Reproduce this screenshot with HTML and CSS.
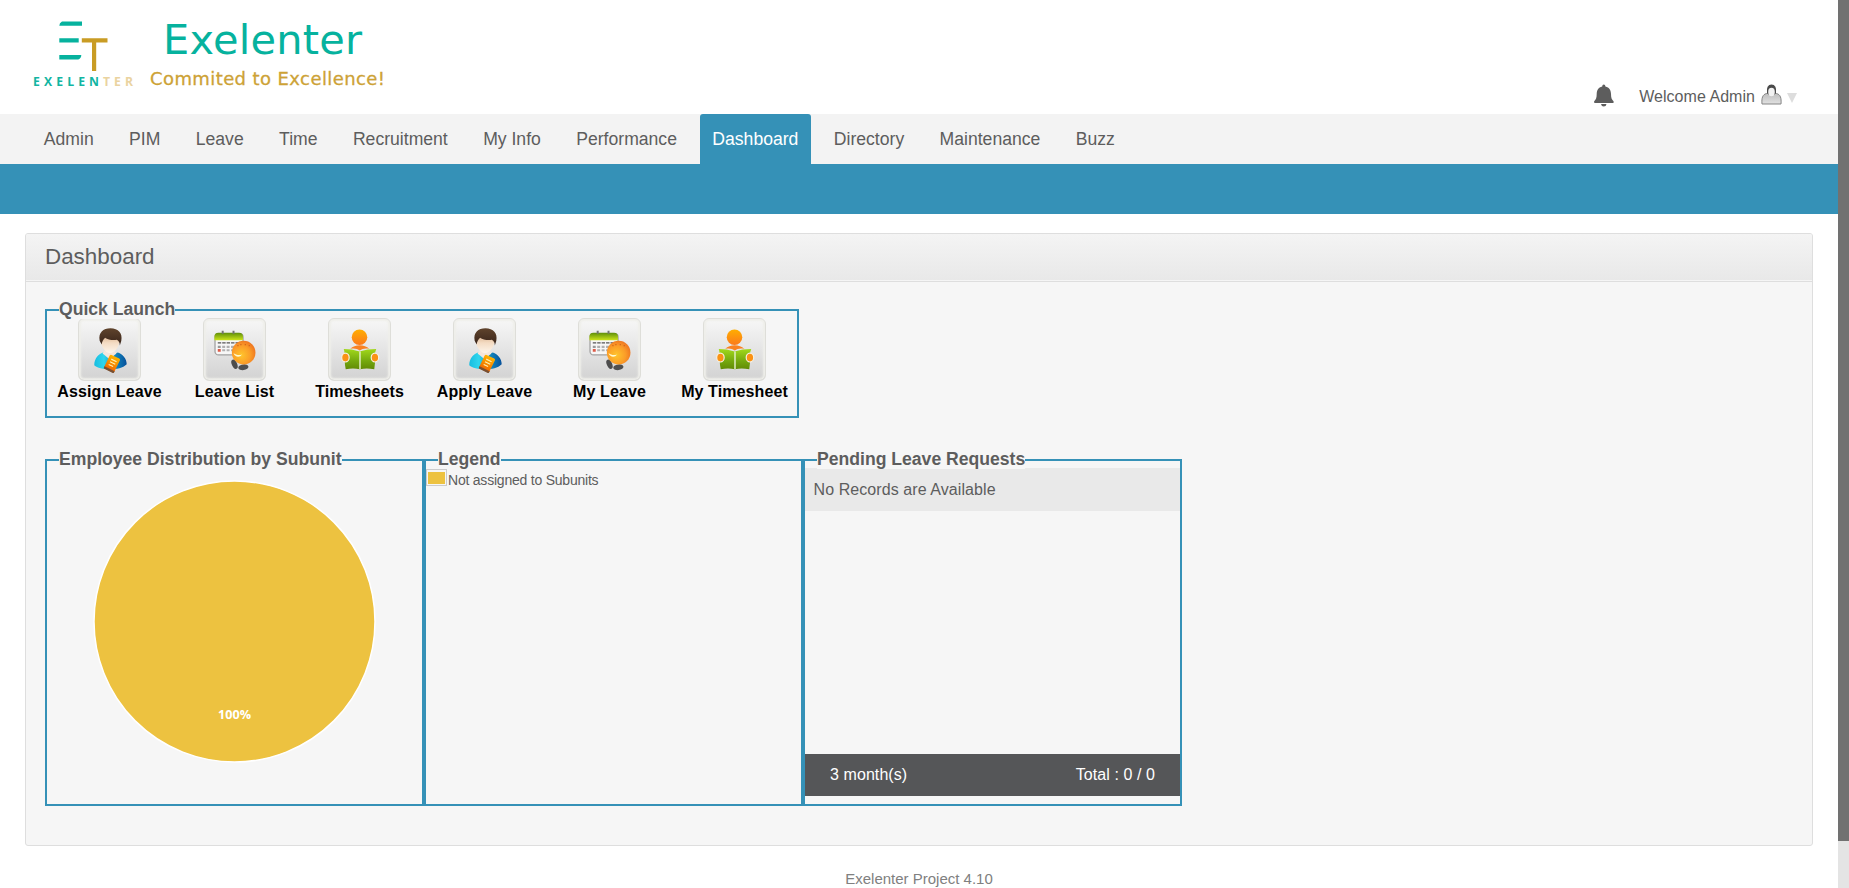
FILE: index.html
```html
<!DOCTYPE html>
<html lang="en">
<head>
<meta charset="utf-8">
<title>Exelenter</title>
<link rel="stylesheet" href="styles.css">
</head>
<body>
<svg class="defs" width="0" height="0" aria-hidden="true">
  <defs>
    <linearGradient id="gHair" x1="0" y1="0" x2="0" y2="1"><stop offset="0" stop-color="#5f432c"/><stop offset="1" stop-color="#38241a"/></linearGradient>
    <linearGradient id="gFace" x1="0" y1="0" x2="0" y2="1"><stop offset="0" stop-color="#c9976c"/><stop offset=".55" stop-color="#f4dcc4"/><stop offset="1" stop-color="#fdf4ea"/></linearGradient>
    <linearGradient id="gShirt" x1="0" y1="0" x2="1" y2="0"><stop offset="0" stop-color="#18bde0"/><stop offset=".3" stop-color="#2fd6ee"/><stop offset=".6" stop-color="#1390c4"/><stop offset="1" stop-color="#07509a"/></linearGradient>
    <linearGradient id="gBook" x1="0" y1="0" x2="0" y2="1"><stop offset="0" stop-color="#ffb400"/><stop offset="1" stop-color="#ef6200"/></linearGradient>
    <linearGradient id="gCal" x1="0" y1="0" x2="0" y2="1"><stop offset="0" stop-color="#5f8f0a"/><stop offset="1" stop-color="#cbe41a"/></linearGradient>
    <radialGradient id="gBall" cx=".4" cy=".6" r=".65"><stop offset="0" stop-color="#ffc52c"/><stop offset=".6" stop-color="#fb9d28"/><stop offset="1" stop-color="#ee7420"/></radialGradient>
    <linearGradient id="gGreen" x1="0" y1="0" x2="0" y2="1"><stop offset="0" stop-color="#a2d81c"/><stop offset=".6" stop-color="#74a80e"/><stop offset="1" stop-color="#628b05"/></linearGradient>
    <linearGradient id="gHead" x1="0" y1="0" x2="0" y2="1"><stop offset="0" stop-color="#ffae00"/><stop offset="1" stop-color="#fb7a1c"/></linearGradient>
    <linearGradient id="gUser" x1="0" y1="0" x2="0" y2="1"><stop offset="0" stop-color="#bdbdbd"/><stop offset="1" stop-color="#e2e2e2"/></linearGradient>

    <symbol id="person" viewBox="0 0 62 62">
      <path d="M15.500 47c0-7 4-11 9-13l7 3 8-3c5 2 9 6 9 12-4 4-10 5-17 5s-13-1-16-4z" fill="url(#gShirt)"/>
      <path d="M26 32l-2 3 7 6 7-6-2-3z" fill="#f5e6dc"/>
      <path d="M22 20c0-6 4-8 9.500-8s9.500 3 9.500 9c0 8-5 13.500-9.500 13.500S22 28 22 20z" fill="url(#gFace)"/>
      <path d="M21 22c-1.500-8 3.500-12.500 11-12.500 8 0 12.500 5 11 12.500L41.500 27c0-3-1-5-3-6-4 1-9 0-12-2-2 2-3 4-3.500 7z" fill="url(#gHair)"/>
      <g transform="rotate(26 33.500 45)"><rect x="28" y="37.500" width="11.500" height="15.500" rx="1.500" fill="url(#gBook)"/><path d="M28 51h11.500v1.500q0 1-1 1H29q-1 0-1-1z" fill="#795032"/><path d="M31 41.500h6M31 44.500h6M31 47.500h5" stroke="#fff0b0" stroke-width="1.200"/></g>
    </symbol>
    <symbol id="calendar" viewBox="0 0 62 62">
      <rect x="11.200" y="15" width="28.500" height="21.500" rx="3.500" fill="#f7f7f7" stroke="#a1a1a1" stroke-width="1.300"/>
      <path d="M10.600 21.500v-3.500q0-4 4-4h21q4 0 4 4v3.500z" fill="url(#gCal)"/>
      <path d="M19 12v3M30 12v3" stroke="#747474" stroke-width="2"/>
      <path d="M14 24.300h22" stroke="#555" stroke-width="1.300" stroke-dasharray="3.500 1"/>
      <path d="M18.500 28.300h17M18.500 31.800h12" stroke="#b0b0b0" stroke-width="2.200" stroke-dasharray="3 1.500"/>
      <path d="M14 28.300h3" stroke="#999" stroke-width="2.200"/><path d="M14 31.800h3" stroke="#dd5b48" stroke-width="2.800"/>
      <ellipse cx="31" cy="46" rx="2.700" ry="5" fill="#4d4d4d" transform="rotate(-24 31 46)"/>
      <ellipse cx="40" cy="49" rx="5.200" ry="2.900" fill="#505050" transform="rotate(-8 40 49)"/>
      <circle cx="40.300" cy="34.200" r="12" fill="url(#gBall)"/>
      <path d="M30 34.500c3 2.500 6 2.500 8.500 1.500-2 3.500-7 3-8.500-1.500z" fill="#fffbd0"/>
      <path d="M34.500 26.500v1.200M37.500 25.500v1.200M42 25.500v1.200M46 26.500v1.200" stroke="#d0641c" stroke-width="1.200"/>
    </symbol>
    <symbol id="reader" viewBox="0 0 62 62">
      <circle cx="31" cy="18.500" r="7.900" fill="url(#gHead)"/>
      <path d="M21.500 30.500c5-5 14.500-5 19.500 0-4-1-7.500 0-9.700 1.500-2.300-1.500-5.800-2.500-9.800-1.500z" fill="#f98222"/>
      <path d="M15 30.500q8 0 16 2.500 8-2.500 17-2.500-2 5-1 12l-1 8.500q-8-1.500-14.500 0-7-1.500-14.500 0-1-5-1-8 .5-8-1-12.500z" fill="url(#gGreen)"/>
      <path d="M31.500 33v18" stroke="#e4efc8" stroke-width="1.500"/>
      <ellipse cx="16.700" cy="39.200" rx="3.800" ry="4.500" fill="#fb9214" stroke="#f5f1e4" stroke-width="1.200"/>
      <ellipse cx="46.700" cy="39.200" rx="3.800" ry="4.500" fill="#fb9214" stroke="#f5f1e4" stroke-width="1.200"/>
    </symbol>
  </defs>
</svg>

<div class="screen">
  <div class="page">
    <header class="header">
      <svg class="logo" width="360" height="90" viewBox="30 10 360 90" role="img" aria-label="Exelenter">
        <path d="M62 21.500h20v4.300H59.300q0-3 2.700-4.300zM59.300 38.200h19.400v4.300H59.300zM59.300 55h22q0 3-3 4.500H59.300z" fill="#06b29e"/>
        <path d="M81.800 38.200h25.700v4.300H96.200v28.500h-4.200V42.500H81.800z" fill="#c99c24"/>
        <g class="logo-mark"><text x="33" y="86" textLength="66" fill="#12b5a2">EXELEN</text><text x="103" y="86" textLength="30" fill="#ead3a0">TER</text></g>
        <text class="logo-name" x="163" y="53.500" textLength="199">Exelenter</text>
        <text class="logo-tag" x="150" y="84.500" textLength="235">Commited to Excellence!</text>
      </svg>
      <div class="user">
        <svg class="bell" width="20" height="23" viewBox="0 0 20 23"><path d="M8.200 2.500Q8.200.500 9.800.500t1.600 2c4 .8 5.600 4 5.600 7.500 0 4 .8 5.500 2.300 7 .8 1 .3 2-.6 2H1C0 19-.3 18 .4 17c1.500-1.500 2.300-3 2.300-7 0-3.500 1.600-6.700 5.500-7.500zM7 20h5.500q-.4 2.600-2.700 2.600T7 20z" fill="#5d5d5d"/></svg>
        <span class="welcome">Welcome Admin</span>
        <svg class="avatar" width="21" height="21" viewBox="0 0 21 21"><path d="M1 20c-.5-6 .5-9.500 4.500-10.500h10c4 1 5 4.500 4.500 10.500z" fill="url(#gUser)" stroke="#858585"/><path d="M6 9Q5 .5 10.500.5T15 9l-2 2H8z" fill="#4a4a4a"/><ellipse cx="10.500" cy="8" rx="3.300" ry="4.200" fill="#f1f1f1"/></svg>
        <svg class="caret" width="10" height="10" viewBox="0 0 10 10"><path d="M0 0h10L5 10z" fill="#ddd"/></svg>
      </div>
    </header>

    <nav class="nav">
      <a class="tab">Admin</a><a class="tab">PIM</a><a class="tab">Leave</a><a class="tab">Time</a><a class="tab">Recruitment</a><a class="tab">My Info</a><a class="tab">Performance</a><a class="tab tab-active">Dashboard</a><a class="tab">Directory</a><a class="tab">Maintenance</a><a class="tab">Buzz</a>
    </nav>
    <div class="subnav"></div>

    <main class="box">
      <h1 class="box-head">Dashboard</h1>
      <div class="box-body">
        <section class="panel launch">
          <h2 class="legend">Quick Launch</h2>
          <div class="shortcuts">
            <a class="shortcut"><svg class="tile"><use href="#person"/></svg><span>Assign Leave</span></a>
            <a class="shortcut"><svg class="tile"><use href="#calendar"/></svg><span>Leave List</span></a>
            <a class="shortcut"><svg class="tile"><use href="#reader"/></svg><span>Timesheets</span></a>
            <a class="shortcut"><svg class="tile"><use href="#person"/></svg><span>Apply Leave</span></a>
            <a class="shortcut"><svg class="tile"><use href="#calendar"/></svg><span>My Leave</span></a>
            <a class="shortcut"><svg class="tile"><use href="#reader"/></svg><span>My Timesheet</span></a>
          </div>
        </section>
        <div class="row">
          <section class="panel widget">
            <h2 class="legend">Employee Distribution by Subunit</h2>
            <svg class="pie" width="375" height="300" viewBox="0 0 375 300"><circle cx="187.500" cy="152.500" r="140.500" fill="#edc240" stroke="#fff" stroke-width="1.500"/><text class="pie-label" x="187.500" y="250" text-anchor="middle" textLength="33" lengthAdjust="spacingAndGlyphs">100%</text></svg>
          </section>
          <section class="panel widget">
            <h2 class="legend">Legend</h2>
            <div class="key"><span class="swatch"></span><span class="key-text">Not assigned to Subunits</span></div>
          </section>
          <section class="panel widget">
            <h2 class="legend">Pending Leave Requests</h2>
            <div class="pending">
              <div class="empty">No Records are Available</div>
              <div class="totals"><span>3 month(s)</span><span>Total : 0 / 0</span></div>
            </div>
          </section>
        </div>
      </div>
    </main>
    <footer class="footer">Exelenter Project 4.10</footer>
  </div>
  <div class="scrollbar"><div class="thumb"></div></div>
</div>
</body>
</html>
```

FILE: styles.css
```css
* { box-sizing: border-box; }
body { margin: 0; background: #fff; color: #5d5d5d; font: 16px "Liberation Sans", Arial, sans-serif; overflow: hidden; }
.defs { position: absolute; }
.screen { display: flex; height: 888px; }
.page { flex: 1; min-width: 0; overflow: hidden; }
.scrollbar { width: 11px; background: #e4e4e4; }
.thumb { height: 841px; background: #717171; }

.header { display: flex; justify-content: space-between; align-items: flex-start; height: 114px; padding: 10px 41px 0 30px; }
.logo-mark { font: bold 12.200px "Open Sans", sans-serif; }
.logo-name { font: 41.500px "DejaVu Sans", sans-serif; fill: #06b29e; }
.logo-tag { font: 18px "DejaVu Sans", sans-serif; fill: #cda236; stroke: #cda236; stroke-width: .3px; }
.user { display: flex; align-items: center; height: 24px; margin-top: 74px; }
.bell { margin-right: 25px; margin-top: -1px; }
.welcome { margin-right: 6px; letter-spacing: .04px; padding-top: 1px; }
.avatar { margin-right: 5px; margin-top: -3px; }
.caret { margin-top: 3px; }

.nav { display: flex; gap: 10.400px; height: 50px; padding-left: 31.300px; background: #f3f3f3; }
.tab { padding: 0 12.500px; font-size: 17.600px; line-height: 50px; }
.tab-active { color: #fff; background: #3591b7; border-radius: 3px 3px 0 0; }
.subnav { height: 50px; background: #3591b7; }

.box { height: 613px; margin: 19px 25px 0; border: 1px solid #dedede; border-radius: 3px; background: #f6f6f6; overflow: hidden; }
.box-head { margin: 0; height: 48px; padding-left: 19px; border-bottom: 1px solid #dedede; background: linear-gradient(#f4f4f4, #e8e8e8); box-shadow: inset 0 -1px #f5f5f5; font-size: 22.400px; font-weight: normal; line-height: 46px; }
.box-body { padding: 27px 19px 0; }
.panel { display: flex; flex-direction: column; border: 2px solid #3591b7; }
.legend { align-self: flex-start; height: 20px; margin: -12px 0 0 12px; background: #f6f6f6; font-size: 17.600px; line-height: 20px; white-space: nowrap; position: relative; z-index: 1; }
.launch { width: 754px; height: 109px; }
.shortcuts { display: flex; margin-top: -1px; }
.shortcut { display: flex; flex-direction: column; align-items: center; width: 125px; color: #000; font-weight: bold; line-height: 20px; letter-spacing: .1px; white-space: nowrap; }
.tile { width: 63px; height: 63px; margin-bottom: 1px; border-radius: 6px; border: 1px solid #deded9; background: linear-gradient(#f7f7f7, #d2d2d2); box-shadow: inset 0 0 2px 2px #efefea; }
.row { display: flex; margin-top: 41px; }
.widget { width: 379px; height: 347px; }
.key { display: flex; align-items: flex-start; }
.swatch { width: 21px; height: 17px; padding: 2px 1px 1px; border: 1px solid #ccc; background: #edc240 content-box; }
.key-text { font-size: 14px; line-height: 23px; letter-spacing: -.22px; margin-left: 1px; }
.pie-label { font: bold 13px "Open Sans", sans-serif; fill: #fff; }
.pending { display: flex; flex-direction: column; justify-content: space-between; height: 328px; margin-top: -1px; }
.empty { height: 43px; padding-left: 8.500px; background: #e9e9e9; line-height: 43px; letter-spacing: .08px; }
.totals { display: flex; justify-content: space-between; height: 42px; padding: 0 25px; background: #555658; color: #fff; line-height: 41px; letter-spacing: .08px; }
.footer { margin-top: 24px; text-align: center; color: #808080; font-size: 15px; line-height: 18px; }
```
